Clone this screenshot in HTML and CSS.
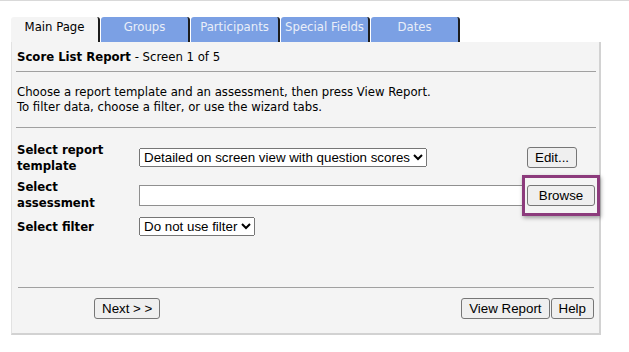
FILE: index.html
```html
<!DOCTYPE html>
<html>
<head>
<meta charset="utf-8">
<link rel="stylesheet" href="styles.css">
</head>
<body>
<div class="page">
  <div class="tabs">
    <div class="tab active">Main Page</div>
    <div class="tab">Groups</div>
    <div class="tab">Participants</div>
    <div class="tab">Special Fields</div>
    <div class="tab">Dates</div>
  </div>
  <div class="panel">
    <div class="title"><b>Score List Report</b> - Screen 1 of 5</div>
    <div class="rule"></div>
    <div class="intro">
      <div>Choose a report template and an assessment, then press View Report.</div>
      <div>To filter data, choose a filter, or use the wizard tabs.</div>
    </div>
    <div class="rule"></div>
    <div class="form">
      <div class="label">Select report<br>template</div>
      <div class="ctrl">
        <select class="sel"><option>Detailed on screen view with question scores</option></select>
      </div>
      <div class="btncell"><button class="btn">Edit...</button></div>

      <div class="label">Select<br>assessment</div>
      <div class="ctrl"><input class="field" type="text"></div>
      <div class="btncell">
        <button class="btn browse">Browse</button>
        <div class="highlight"></div>
      </div>

      <div class="label">Select filter</div>
      <div class="ctrl">
        <select class="sel"><option>Do not use filter</option></select>
      </div>
      <div class="btncell"></div>
    </div>
    <div class="rule low"></div>
    <div class="actions">
      <button class="btn next">Next &gt; &gt;</button>
      <div class="right">
        <button class="btn">View Report</button><button class="btn">Help</button>
      </div>
    </div>
  </div>
</div>
</body>
</html>
```

FILE: styles.css
```css
html, body {
  margin: 0;
  padding: 0;
  background: #ffffff;
}
body {
  border-top: 1px solid #d9d9d9;
  font-family: "DejaVu Sans Condensed", "DejaVu Sans", sans-serif;
  font-size: 13px;
  color: #000;
}
.page {
  padding: 16px 0 0 11px;
  width: 590px;
}
.tabs {
  display: flex;
  height: 25px;
}
.tab {
  width: 89px;
  margin-right: 1px;
  border-right: 2px solid #1c1c1c;
  background: #7ba0e4;
  color: #e9eef8;
  text-align: center;
  line-height: 16px;
  padding-top: 2px;
  border-radius: 3px 3px 0 0;
  box-sizing: border-box;
}
.tab.active {
  background: #f4f4f4;
  color: #000;
}
.panel {
  background: #f4f4f4;
  border-left: 1px solid #e2e2e2;
  border-right: 2px solid #d2d2d2;
  border-bottom: 2px solid #d2d2d2;
  padding: 7px 3px 14px 4px;
  width: 580px;
}
.title {
  line-height: 15px;
  padding-left: 1px;
}
.rule {
  border-top: 1px solid #a0a0a0;
  margin-top: 7px;
}
.intro {
  line-height: 15px;
  margin-top: 12px;
  margin-bottom: 13px;
  padding-left: 1px;
}
.form {
  display: grid;
  grid-template-columns: 123px 388px 69px;
  grid-template-rows: 31px 32px 19px;
  row-gap: 6px;
  margin-top: 14px;
  align-items: center;
}
.label {
  font-weight: bold;
  line-height: 16px;
  padding-left: 1px;
}
.ctrl {
  display: flex;
  align-items: center;
}
.sel {
  font-family: "Liberation Sans", Arial, sans-serif;
  font-size: 13.333px;
  height: 19px;
  margin: 0;
}
.field {
  font-family: "Liberation Sans", Arial, sans-serif;
  font-size: 13.333px;
  width: 386px;
  height: 21px;
  box-sizing: border-box;
  margin: 1px 0 0;
  border: 1px solid #8f8f8f;
  background: #fff;
}
.btncell {
  position: relative;
  display: flex;
  align-items: center;
}
.btn {
  font-family: "Liberation Sans", Arial, sans-serif;
  font-size: 13.333px;
  height: 21px;
  padding: 0 7px;
  margin: 0;
  background: #efefef;
  border: 1px solid #767676;
  border-radius: 3px;
  color: #000;
}
.btn.browse {
  width: 68px;
  margin-top: 1px;
}
.highlight {
  position: absolute;
  left: -5px;
  top: -9px;
  width: 78px;
  height: 41px;
  box-sizing: border-box;
  border: 3px solid #8c3b7c;
  box-shadow: 1px 2px 4px rgba(0,0,0,0.35);
  pointer-events: none;
}
.rule.low {
  margin-top: 51px;
  margin-left: 2px;
  margin-right: 2px;
}
.actions {
  display: flex;
  justify-content: space-between;
  margin-top: 10px;
  padding-left: 78px;
  padding-right: 2px;
}
.right {
  display: flex;
  gap: 1px;
}
```
